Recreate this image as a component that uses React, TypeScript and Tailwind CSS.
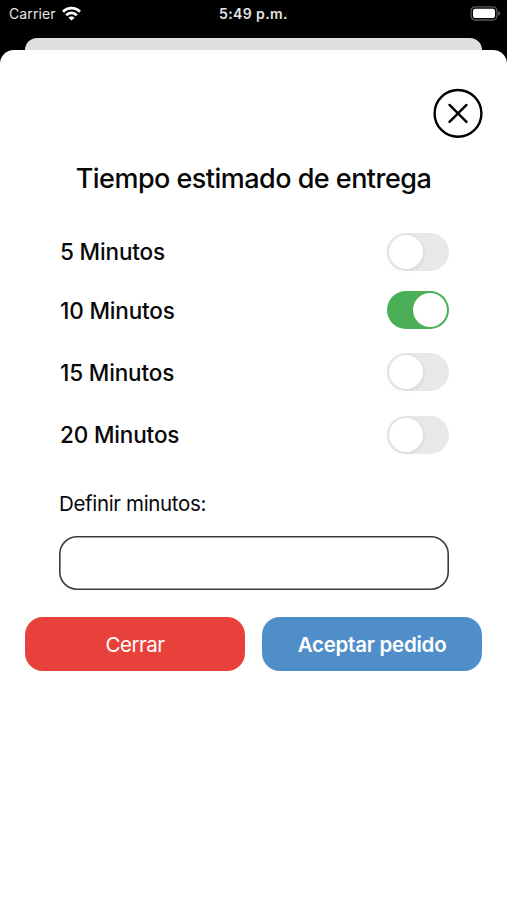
import { useState } from 'react';
import clsx from 'clsx';

const OPTIONS = [
  { minutes: 5, row: 'h-[38px]', text: '' },
  { minutes: 10, row: 'mt-5 h-[38px]', text: 'pt-px' },
  { minutes: 15, row: 'mt-6 h-[38px]', text: 'pt-px' },
  { minutes: 20, row: 'mt-[25px] h-[38px]', text: '' },
] as const;

function StatusBar() {
  return (
    <div className="grid h-[38px] grid-cols-3 items-start px-[9px] text-[#e4e4e4]">
      <div className="flex items-center gap-1.5 pt-[5px]">
        <span className="text-[14px] leading-[18px] tracking-[0.1px]">Carrier</span>
        <svg width="19" height="15" viewBox="0 0 19 15" className="-mt-0.5" fill="none" stroke="white" strokeWidth="2.8">
          <path d="M1 5.7C5.8.9 13.2.9 18 5.7" />
          <path d="M4.2 9.2c3-3 7.6-3 10.6 0" />
          <path d="M9.5 14.6 6.4 11.7c1.6-1.7 4.6-1.7 6.2 0Z" fill="white" stroke="none" />
        </svg>
      </div>
      <span className="pt-[5px] text-center text-[14px] leading-[18px] font-semibold tracking-[0.4px] whitespace-nowrap">5:49 p.m.</span>
      <svg width="31" height="15" viewBox="0 0 31 15" className="-mr-[3px] mt-1.5 justify-self-end">
        <rect x="1.1" y=".8" width="25.8" height="13.2" rx="4" fill="none" stroke="#5a5a5a" strokeWidth="1.3" />
        <rect x="3" y="2.7" width="22" height="9.4" rx="2.2" fill="white" />
        <path d="M28.3 5c2.4 1 2.4 3.8 0 4.8Z" fill="#6a6a6a" />
      </svg>
    </div>
  );
}

function Toggle({ checked, onChange, label }: { checked: boolean; onChange: () => void; label: string }) {
  return (
    <button
      type="button"
      role="switch"
      aria-checked={checked}
      aria-label={label}
      onClick={onChange}
      className={clsx(
        'flex h-[38px] w-[62px] items-center rounded-full p-0.5',
        checked ? 'justify-end bg-[#4baf58]' : 'justify-start bg-[#e8e8ea]',
      )}
    >
      <span
        className={clsx(
          'size-[34px] rounded-full bg-white',
          !checked && 'shadow-[0_1px_5px_rgba(0,0,0,0.09)]',
        )}
      />
    </button>
  );
}

export default function App() {
  const [selected, setSelected] = useState(10);
  const [custom, setCustom] = useState('');

  return (
    <div className="flex h-[900px] w-[507px] flex-col overflow-hidden bg-black font-['Inter','Liberation_Sans',sans-serif] text-[#080808]">
      <StatusBar />
      <div className="mx-[25px] h-3 shrink-0 rounded-t-[12px] bg-[#dfdfdf]" />
      <main className="flex grow flex-col rounded-t-[14px] bg-white px-[25px] pt-[39px]">
        <button type="button" aria-label="Cerrar ventana" className="size-[49px] self-end">
          <svg width="49" height="49" viewBox="0 0 49 49" className="overflow-visible" fill="none" stroke="black">
            <circle cx="25" cy="24.4" r="23.4" strokeWidth="2.4" />
            <path d="m16.5 15.9 17 17M33.5 15.9l-17 17" strokeWidth="2.4" strokeLinecap="round" />
          </svg>
        </button>
        <h1 className="mt-[25px] text-center text-[27px] leading-8 font-medium tracking-[-0.53px]">Tiempo estimado de entrega</h1>

        <div className="mt-[38px] pr-[33px] pl-[35px]">
          {OPTIONS.map(({ minutes, row, text }) => (
            <div key={minutes} className={clsx('flex items-center justify-between', row)}>
              <span className={clsx('text-[22.5px] leading-7 font-medium tracking-[-0.15px]', text)}>
                {minutes} Minutos
              </span>
              <Toggle
                checked={selected === minutes}
                onChange={() => setSelected(minutes)}
                label={`${minutes} Minutos`}
              />
            </div>
          ))}
        </div>

        <label className="mt-9 flex flex-col pr-[33px] pl-[34px]">
          <span className="text-[20.5px] leading-7 tracking-[-0.35px]">Definir minutos:</span>
          <input
            value={custom}
            onChange={(e) => setCustom(e.target.value)}
            inputMode="numeric"
            className="mt-[18px] h-[54px] w-full rounded-[18px] px-4 text-xl shadow-[inset_0_0_0_1.6px_#3c3c3c] outline-none"
          />
        </label>

        <div className="mt-[27px] grid grid-cols-2 gap-[17px] text-[20.5px] leading-7 text-white">
          <button type="button" className="h-[54px] rounded-[18px] bg-[#e8413c] pt-0.5 tracking-[-0.5px]">
            Cerrar
          </button>
          <button type="button" className="h-[54px] rounded-[18px] bg-[#508ec9] pt-0.5 font-semibold tracking-[-0.25px]">
            Aceptar pedido
          </button>
        </div>
      </main>
    </div>
  );
}
